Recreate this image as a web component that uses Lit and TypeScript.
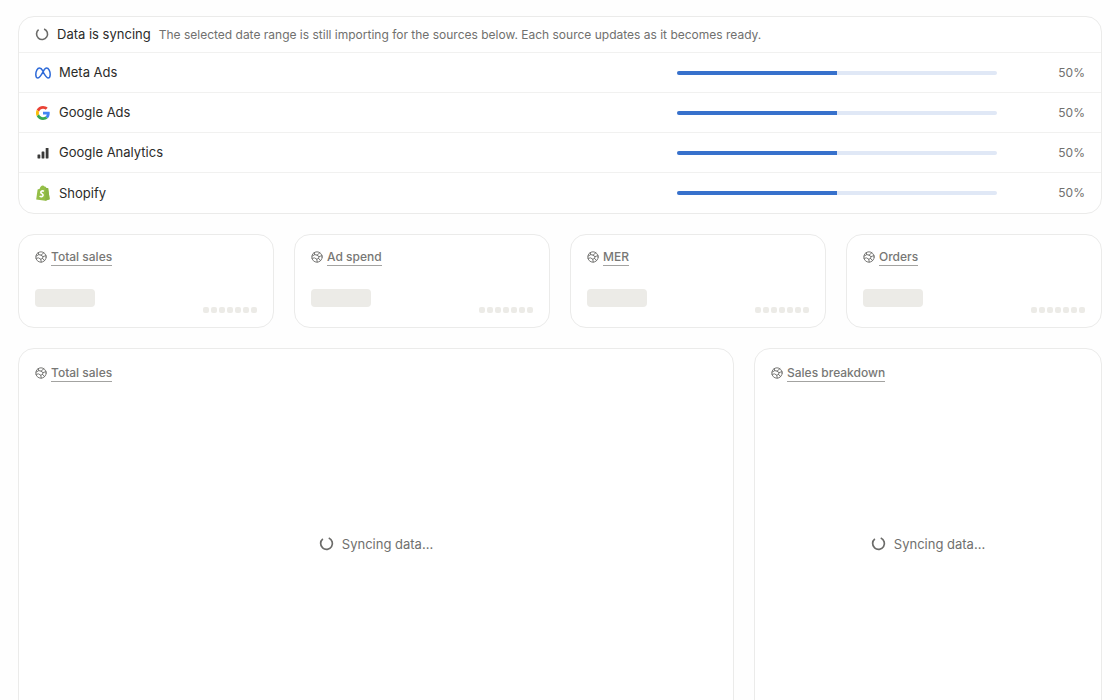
import { LitElement, html, css, svg } from "lit";
import { customElement, property } from "lit/decorators.js";

const metaIcon = html`<svg viewBox="0 0 16 16" width="16" height="16" fill="none" aria-hidden="true">
  <path d="M8 6.100C6.900 4.200 5.900 3.100 4.500 3.100 2.300 3.100.8 6.200.8 9.400c0 2.100.8 3.500 2.200 3.500 1.500 0 2.500-1.400 5-6C9.200 4.600 10.200 3.100 11.600 3.100c2.100 0 3.600 3.100 3.600 6.300 0 2.100-.8 3.500-2.200 3.500-1.500 0-2.400-1.400-5-6z" stroke="#2f6bd8" stroke-width="1.500" stroke-linejoin="round"/>
</svg>`;

const googleIcon = html`<svg viewBox="0 0 48 48" width="14" height="14" aria-hidden="true">
  <path fill="#EA4335" d="M24 9.500c3.540 0 6.710 1.220 9.210 3.600l6.850-6.850C35.900 2.380 30.470 0 24 0 14.620 0 6.510 5.380 2.560 13.220l7.980 6.190C12.430 13.720 17.740 9.500 24 9.500z"/>
  <path fill="#4285F4" d="M46.980 24.550c0-1.570-.15-3.090-.38-4.550H24v9.020h12.940c-.58 2.960-2.260 5.480-4.780 7.180l7.730 6c4.510-4.180 7.090-10.360 7.090-17.650z"/>
  <path fill="#FBBC05" d="M10.530 28.590c-.48-1.450-.76-2.990-.76-4.590s.27-3.140.76-4.590l-7.980-6.190C.92 16.460 0 20.120 0 24c0 3.880.92 7.540 2.560 10.780l7.970-6.190z"/>
  <path fill="#34A853" d="M24 48c6.480 0 11.930-2.130 15.890-5.810l-7.730-6c-2.150 1.450-4.920 2.300-8.160 2.300-6.260 0-11.570-4.220-13.470-9.910l-7.980 6.190C6.510 42.620 14.620 48 24 48z"/>
</svg>`;

const analyticsIcon = html`<svg viewBox="0 0 16 16" width="16" height="16" fill="#3a3a39" aria-hidden="true">
  <rect x="2.500" y="9.500" width="2.800" height="4" rx=".4"/>
  <rect x="6.600" y="6.500" width="2.800" height="7" rx=".4"/>
  <rect x="10.700" y="3" width="2.800" height="10.500" rx=".4"/>
</svg>`;

const shopifyIcon = html`<svg viewBox="0 0 16 16" width="16" height="16" aria-hidden="true">
  <path fill="#95bf47" d="M2.600 4.500 4.700 3.800C5.100 1.900 6.300.6 7.800.5c.7 0 1.300.4 1.600 1.100l.8-.1 1.200 1.400 1.700.2L14.700 14.300 10.400 15.700 1.200 14.400z"/>
  <path fill="#8ab544" d="m10.400 1.700 1 1.200 1.700.2L14.700 14.300l-4.300 1.400z"/>
  <path fill="none" stroke="#fff" stroke-width="1.600" d="M8.900 6.200C7.500 5.500 5.800 6 5.800 7.200c0 1.600 2.400 1.400 2.300 3.100-.1 1.400-2 1.800-3.500.8"/>
</svg>`;

const globeIcon = html`<svg viewBox="0 0 12 12" width="12" height="12" fill="none" stroke="#6b6b69" stroke-width=".9" stroke-linecap="round" stroke-linejoin="round" aria-hidden="true">
  <circle cx="6" cy="6" r="5.200"/>
  <path d="M3.200 1.700 3.800 3.600 1.200 5.100M3.800 3.600 6 4.200 8.900 1.700M6 4.200 8 5.600 11 4.600M8 5.600 7.600 7.400 9.500 9.600M6.200 11 5.800 8.200 3.600 6.900 1.100 7.300M5.800 8.200 7.600 7.400"/>
</svg>`;

@customElement("sync-spinner")
class SyncSpinner extends LitElement {
  @property({ type: Number }) size = 14;

  static styles = css`
    :host { display: flex; flex: none; }
  `;

  render() {
    return html`<svg viewBox="0 0 14 14" width=${this.size} height=${this.size} fill="none" aria-hidden="true">
      ${svg`<path d="M9.100 1.900A5.500 5.500 0 1 1 3.600 2.700" stroke="#6b6b69" stroke-width="1.600"/>`}
    </svg>`;
  }
}

@customElement("metric-title")
class MetricTitle extends LitElement {
  @property() label = "";

  static styles = css`
    :host { display: flex; align-items: flex-start; gap: 4px; }
    svg { display: block; flex: none; margin-top: 2px; }
    .label {
      margin: 0;
      padding: 0;
      border: 0;
      border-bottom: 1px solid #a3a3a1;
      background: none;
      font: 500 12px/16px Inter, sans-serif;
      color: #777775;
      cursor: help;
    }
  `;

  render() {
    return html`${globeIcon}<button class="label" type="button">${this.label}</button>`;
  }
}

@customElement("app-root")
class AppRoot extends LitElement {
  private sources = [
    { id: "meta", name: "Meta Ads", icon: metaIcon, progress: 50 },
    { id: "google", name: "Google Ads", icon: googleIcon, progress: 50 },
    { id: "analytics", name: "Google Analytics", icon: analyticsIcon, progress: 50 },
    { id: "shopify", name: "Shopify", icon: shopifyIcon, progress: 50 },
  ];
  private metrics = ["Total sales", "Ad spend", "MER", "Orders"];

  static styles = css`
    :host {
      display: block;
      background: #fefefe;
      font-family: Inter, sans-serif;
      color: #2b2b29;
    }
    * { box-sizing: border-box; }
    .page {
      display: grid;
      grid-template-columns: repeat(12, minmax(0, 1fr));
      gap: 20px;
      padding: 16px 18px;
    }
    .card {
      border: 1px solid #ebebea;
      border-radius: 16px;
      background: #fff;
    }
    .sync { grid-column: span 12; }
    .sync-head {
      display: flex;
      align-items: center;
      gap: 8px;
      padding: 7px 16px 8px;
      border-bottom: 1px solid #f1f1f0;
    }
    .sync-title { margin: 0; font-size: 13px; line-height: 20px; font-weight: 400; }
    .sync-note { margin: 0; font-size: 12px; line-height: 17px; color: #70706e; }
    .sources { list-style: none; margin: 0; padding: 0; }
    .source {
      display: grid;
      grid-template-columns: minmax(0, 1fr) minmax(0, 320px) 72px;
      column-gap: 16px;
      align-items: center;
      height: 40px;
      padding: 0 16px;
      border-bottom: 1px solid #f1f1f0;
    }
    .source:last-child { border-bottom: 0; }
    .source-name {
      display: flex;
      align-items: center;
      gap: 8px;
      font-size: 13px;
      line-height: 21px;
    }
    .source-icon { display: flex; justify-content: center; width: 16px; }
    .bar {
      appearance: none;
      display: block;
      width: 100%;
      height: 4px;
      border: 0;
      border-radius: 2px;
      overflow: hidden;
      background: #e0e8f6;
    }
    .bar::-webkit-progress-bar { background: #e0e8f6; }
    .bar::-webkit-progress-value { background: #3771cc; }
    .percent { text-align: right; font-size: 12px; line-height: 16px; color: #70706e; }
    .metric {
      grid-column: span 3;
      display: flex;
      flex-direction: column;
      justify-content: space-between;
      min-height: 94px;
      padding: 14px 16px;
    }
    .metric-body { display: flex; justify-content: space-between; align-items: flex-end; }
    .skeleton { width: 60px; height: 18px; margin-bottom: 6px; border-radius: 4px; background: #ecebe7; }
    .dots { display: flex; gap: 2px; }
    .dot { width: 6px; height: 6px; border-radius: 2px; background: #ecebe7; }
    .panel {
      display: flex;
      flex-direction: column;
      gap: 6px;
      min-height: 368px;
      padding: 16px;
    }
    .wide { grid-column: span 8; }
    .narrow { grid-column: span 4; }
    .loading {
      flex: 1;
      display: flex;
      align-items: center;
      justify-content: center;
      gap: 8px;
      font-size: 13px;
      line-height: 20px;
      color: #70706e;
    }
  `;

  private panel(label: string, span: string) {
    return html`<section class="card panel ${span}">
      <metric-title label=${label}></metric-title>
      <div class="loading" role="status"><sync-spinner size="15"></sync-spinner>Syncing data...</div>
    </section>`;
  }

  render() {
    return html`<main class="page">
      <section class="card sync">
        <header class="sync-head">
          <sync-spinner></sync-spinner>
          <h2 class="sync-title">Data is syncing</h2>
          <p class="sync-note">The selected date range is still importing for the sources below. Each source updates as it becomes ready.</p>
        </header>
        <ul class="sources">
          ${this.sources.map(
            (s) => html`<li class="source">
              <label class="source-name" for=${s.id}><span class="source-icon">${s.icon}</span>${s.name}</label>
              <progress class="bar" id=${s.id} max="100" value=${s.progress}></progress>
              <span class="percent">${s.progress}%</span>
            </li>`
          )}
        </ul>
      </section>
      ${this.metrics.map(
        (m) => html`<section class="card metric">
          <metric-title label=${m}></metric-title>
          <div class="metric-body">
            <span class="skeleton"></span>
            <span class="dots">${Array.from({ length: 7 }, () => html`<span class="dot"></span>`)}</span>
          </div>
        </section>`
      )}
      ${this.panel("Total sales", "wide")}
      ${this.panel("Sales breakdown", "narrow")}
    </main>`;
  }
}
